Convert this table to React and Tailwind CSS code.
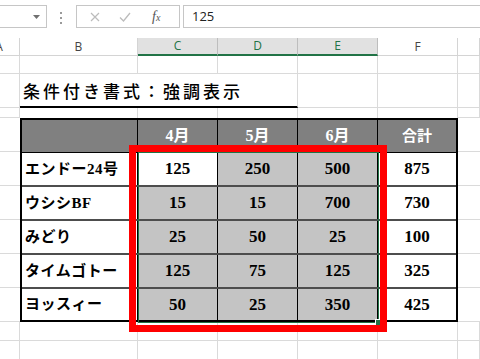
import React from "react";

const jp = { fontFamily: '"Liberation Serif", "Noto Sans CJK JP", serif' };
const ui = { fontFamily: '"Open Sans", "Noto Sans", sans-serif' };

const rows = [
  { name: "エンドー24号", m: [125, 250, 500], total: 875 },
  { name: "ウシシBF", m: [15, 15, 700], total: 730 },
  { name: "みどり", m: [25, 50, 25], total: 100 },
  { name: "タイムゴトー", m: [125, 75, 125], total: 325 },
  { name: "ヨッスィー", m: [50, 25, 350], total: 425 },
];

// plain sheet cell with light gridlines
const Cell = ({ w, className = "", children }) => (
  <div className={`${w} shrink-0 h-full border-r border-b border-[#dadada] ${className}`}>
    {children}
  </div>
);

const EmptyRow = ({ h }) => (
  <div className={`flex ${h}`}>
    <Cell w="w-[20px]" />
    <Cell w="w-[118px]" />
    <Cell w="w-[80px]" />
    <Cell w="w-[80px]" />
    <Cell w="w-[80px]" />
    <Cell w="w-[80px]" />
    <Cell w="w-[22px]" />
  </div>
);

const FormulaBar = () => (
  <div className="flex items-start h-[38px] pt-[5px]" style={ui}>
    {/* Name box */}
    <div className="-ml-[1px] w-[48px] h-[23px] shrink-0 border border-[#c6c6c6] flex items-center justify-end pr-[6px]">
      <svg width="7" height="4" viewBox="0 0 7 4">
        <path d="M0 0H7L3.5 4Z" fill="#707070" />
      </svg>
    </div>
    <div className="ml-[13px] w-[2px] flex flex-col gap-[3px] pt-[7px] shrink-0">
      <span className="w-[2px] h-[2px] bg-[#9a9a9a]" />
      <span className="w-[2px] h-[2px] bg-[#9a9a9a]" />
      <span className="w-[2px] h-[2px] bg-[#9a9a9a]" />
    </div>
    {/* cancel / enter / fx */}
    <div className="ml-[14px] w-[104px] h-[23px] shrink-0 border border-[#c6c6c6] flex items-center pl-[13px]">
      <svg width="10" height="10" viewBox="0 0 10 10">
        <path d="M1 1L9 9M9 1L1 9" stroke="#bcbcbc" strokeWidth="1.2" fill="none" />
      </svg>
      <svg className="ml-[19px]" width="12" height="10" viewBox="0 0 12 10">
        <path d="M1 5.5L4.5 9L11 1" stroke="#bcbcbc" strokeWidth="1.3" fill="none" />
      </svg>
      <span
        className="ml-[21px] italic text-[14px] leading-none text-[#555]"
        style={{ fontFamily: '"Liberation Serif", serif' }}
      >
        f<span className="text-[10px]">x</span>
      </span>
    </div>
    <div className="ml-[3px] w-[310px] h-[23px] shrink-0 border border-[#c6c6c6] flex items-center pl-[8px] text-[13px] text-[#222]">
      125
    </div>
  </div>
);

const ColHead = ({ w, label, sel }) => (
  <div
    className={`${w} shrink-0 h-full flex items-center justify-center text-[12px] ${
      sel
        ? "bg-[#e1e1e1] text-[#217346] border-r border-[#bdbdbd] border-b-2 border-b-[#217346]"
        : "text-[#444] border-r border-b border-[#d4d4d4]"
    }`}
  >
    {label}
  </div>
);

const ColumnHeaders = () => (
  <div className="flex h-[18px]" style={ui}>
    <div className="w-[20px] shrink-0 h-full overflow-hidden flex border-r border-b border-[#d4d4d4]">
      <div className="w-[40px] shrink-0 -ml-[21px] flex items-center justify-center text-[12px] text-[#444]">
        A
      </div>
    </div>
    <ColHead w="w-[118px]" label="B" />
    <ColHead w="w-[80px]" label="C" sel />
    <ColHead w="w-[80px]" label="D" sel />
    <ColHead w="w-[80px]" label="E" sel />
    <ColHead w="w-[80px]" label="F" />
    <ColHead w="w-[22px]" label="" />
  </div>
);

const SideCells = ({ w }) => (
  <div className={`${w} shrink-0 flex flex-col`}>
    {[0, 1, 2, 3, 4, 5].map((i) => (
      <div key={i} className="h-[34px] border-b border-[#dadada]" />
    ))}
  </div>
);

const DataTable = () => (
  <div className="w-[438px] shrink-0 h-[204px] border-2 border-black flex flex-col font-bold" style={jp}>
    {/* header */}
    <div className="flex h-[33px] shrink-0 border-b border-black bg-[#808080] text-white">
      <div className="w-[116px] border-r border-black" />
      {["4月", "5月", "6月"].map((m) => (
        <div key={m} className="w-[80px] border-r border-black flex items-center justify-center text-[16px]">
          {m}
        </div>
      ))}
      <div className="flex-1 flex items-center justify-center text-[15px]">合計</div>
    </div>
    {rows.map((r, i) => {
      const last = i === rows.length - 1;
      return (
        <div
          key={r.name}
          className={`flex shrink-0 ${last ? "h-[31px]" : "h-[34px] border-b-2 border-[#4d4d4d]"}`}
        >
          <div className="w-[116px] border-r border-black flex items-center pl-[3px] text-[15px] tracking-[0.5px] text-black">
            {r.name}
          </div>
          {r.m.map((v, j) => (
            <div
              key={j}
              className={`w-[80px] border-r border-black flex items-center justify-center text-[17px] text-black ${
                i === 0 && j === 0 ? "bg-white" : "bg-[#c4c4c4]"
              }`}
            >
              {v}
            </div>
          ))}
          <div className="flex-1 flex items-center justify-center text-[17px] text-black">{r.total}</div>
        </div>
      );
    })}
  </div>
);

export default function App() {
  return (
    <div className="relative w-[480px] h-[359px] overflow-hidden bg-white">
      <FormulaBar />
      <ColumnHeaders />
      <EmptyRow h="h-[18px]" />
      {/* title row */}
      <div className="flex h-[34px]">
        <Cell w="w-[20px]" />
        <div className="w-[278px] shrink-0 h-full border-r border-[#dadada] border-b-2 border-b-black flex items-center pl-[3px] pt-[1px]">
          <span
            className="text-[17px] tracking-[3px] text-black font-medium whitespace-nowrap"
            style={{ fontFamily: '"Noto Sans CJK JP", sans-serif' }}
          >
            条件付き書式：強調表示
          </span>
        </div>
        <Cell w="w-[80px]" />
        <Cell w="w-[80px]" />
        <Cell w="w-[22px]" />
      </div>
      {/* spacer row above table */}
      <div className="flex h-[10px]">
        <Cell w="w-[20px]" />
        <div className="w-[118px] shrink-0 border-r border-[#dadada]" />
        <div className="w-[80px] shrink-0 border-r border-[#dadada]" />
        <div className="w-[80px] shrink-0 border-r border-[#dadada]" />
        <div className="w-[80px] shrink-0 border-r border-[#dadada]" />
        <div className="w-[80px] shrink-0 border-r border-[#dadada]" />
        <Cell w="w-[22px]" />
      </div>
      <div className="flex h-[204px]">
        <SideCells w="w-[20px]" />
        <DataTable />
        <SideCells w="w-[22px]" />
      </div>
      <EmptyRow h="h-[19px]" />
      <EmptyRow h="h-[19px]" />

      {/* selection outline and fill handle */}
      <div className="absolute left-[138px] top-[152px] w-[241px] h-[171px] border border-[#217346] pointer-events-none" />
      <div className="absolute left-[375px] top-[319px] w-[7px] h-[7px] bg-[#217346] border border-white" />
      {/* red highlight frame */}
      <div className="absolute left-[129px] top-[145px] w-[258px] h-[187px] border-[7px] border-[#ff0000] pointer-events-none" />
    </div>
  );
}
